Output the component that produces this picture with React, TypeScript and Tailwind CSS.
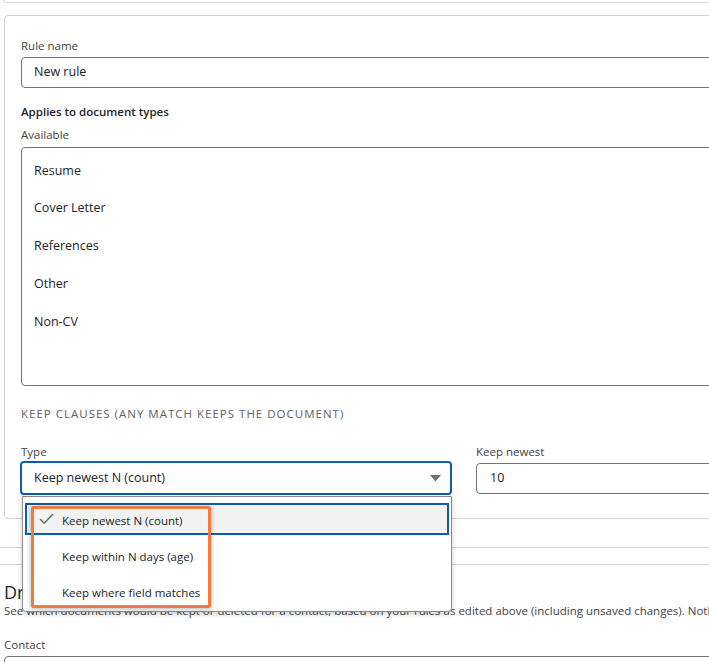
import React from 'react';

const DOC_TYPES = ['Resume', 'Cover Letter', 'References', 'Other', 'Non-CV'];

const KEEP_OPTIONS = [
  { label: 'Keep newest N (count)', selected: true },
  { label: 'Keep within N days (age)', selected: false },
  { label: 'Keep where field matches', selected: false },
];

const CheckIcon = () => (
  <svg width="15" height="14" viewBox="0 0 15 14" fill="none" aria-hidden="true">
    <path d="M1.5 7.5 L5.2 11.2 L13.5 2.5" stroke="#6b6b6b" strokeWidth="1.5" strokeLinecap="round" strokeLinejoin="round" />
  </svg>
);

const ArrowDown = () => (
  <svg width="11" height="7" viewBox="0 0 11 7" aria-hidden="true">
    <path d="M0 0 H11 L5.5 6.5 Z" fill="#707070" />
  </svg>
);

export default function App() {
  return (
    <div className="relative w-[709px] h-[662px] overflow-hidden bg-white text-[#242424] font-['Segoe_UI','Open_Sans',sans-serif]">
      <div className="w-[1000px]">
        {/* end of previous card */}
        <div className="ml-[3px] h-[3px] border-x border-b border-[#d6d6d6] rounded-b-[4px]" />

        {/* rule card */}
        <div className="mt-[12px] ml-[4px] w-[920px] border border-[#d1d1d1] rounded-[4px] px-[16px] pt-[22px] pb-[23px]">
          <label className="block text-[11.5px] leading-[16px] text-[#424242]">Rule name</label>
          <div className="mt-[3px] h-[31px] border border-[#757575] rounded-[4px] px-[12px] flex items-center text-[12.5px]">
            New rule
          </div>

          <div className="mt-[16px] text-[11.5px] leading-[16px] font-semibold">Applies to document types</div>
          <div className="mt-[7px] text-[11.5px] leading-[16px] text-[#424242]">Available</div>
          <div className="mt-[4px] h-[239px] border border-[#757575] rounded-[4px] pt-[4px] px-[12px]">
            {DOC_TYPES.map((t) => (
              <div key={t} className="h-[37.75px] flex items-center text-[12.5px]">
                {t}
              </div>
            ))}
          </div>

          <div className="mt-[20px] text-[11.5px] leading-[16px] tracking-[1px] uppercase text-[#616161]">
            Keep clauses (any match keeps the document)
          </div>

          <div className="mt-[22px] grid grid-cols-2 gap-x-[24px]">
            <div>
              <label className="block text-[11.5px] leading-[16px] text-[#424242]">Type</label>
              <div className="mt-[1px] ml-[-1px] h-[34px] border-2 border-[#0f5ca8] rounded-[4px] pl-[12px] pr-[9px] flex items-center justify-between text-[12.5px]">
                <span>Keep newest N (count)</span>
                <ArrowDown />
              </div>
            </div>
            <div>
              <label className="block text-[11.5px] leading-[16px] text-[#424242]">Keep newest</label>
              <div className="mt-[3px] h-[31px] border border-[#757575] rounded-[4px] px-[13px] flex items-center text-[12.5px]">
                10
              </div>
            </div>
          </div>
        </div>

        {/* collapsed section */}
        <div className="mt-[28px] h-px bg-[#d1d1d1]" />

        {/* dry run */}
        <div className="mt-[16px] border-t border-[#d1d1d1] pl-[4px] pt-[16px]">
          <h2 className="text-[18px] leading-[22px]">Dry run</h2>
          <p className="text-[11.5px] leading-[16px] text-[#424242] whitespace-nowrap">
            See which documents would be kept or deleted for a contact, based on your rules as edited above (including unsaved changes). Nothing is deleted.
          </p>
          <label className="mt-[18px] block text-[11.5px] leading-[16px] text-[#424242]">Contact</label>
          <div className="mt-[3px] h-[31px] border border-[#757575] rounded-[4px]" />
        </div>
      </div>

      {/* open dropdown */}
      <div className="absolute left-[22px] top-[496px] w-[430px] h-[116px] bg-white border border-[#8a8a8a] rounded-b-[4px] shadow-[0_2px_6px_rgba(0,0,0,0.18)] pt-[6px] px-[2px]">
        {KEEP_OPTIONS.map((o) => (
          <div
            key={o.label}
            className={
              o.selected
                ? 'mb-[4px] h-[32px] flex items-center border-2 border-[#0f5ca8] bg-[#f2f2f2] text-[11.5px]'
                : 'mb-[4px] h-[32px] flex items-center border-2 border-transparent text-[11.5px]'
            }
          >
            <span className="w-[35px] pl-[12px] flex items-center">{o.selected && <CheckIcon />}</span>
            <span className="pt-[3px]">{o.label}</span>
          </div>
        ))}
      </div>

      {/* annotation highlight */}
      <div className="absolute left-[31px] top-[506px] w-[180px] h-[102px] border-[3px] border-[#f77a3c] rounded-[2px] shadow-[0_1px_5px_rgba(0,0,0,0.3)]" />
    </div>
  );
}
